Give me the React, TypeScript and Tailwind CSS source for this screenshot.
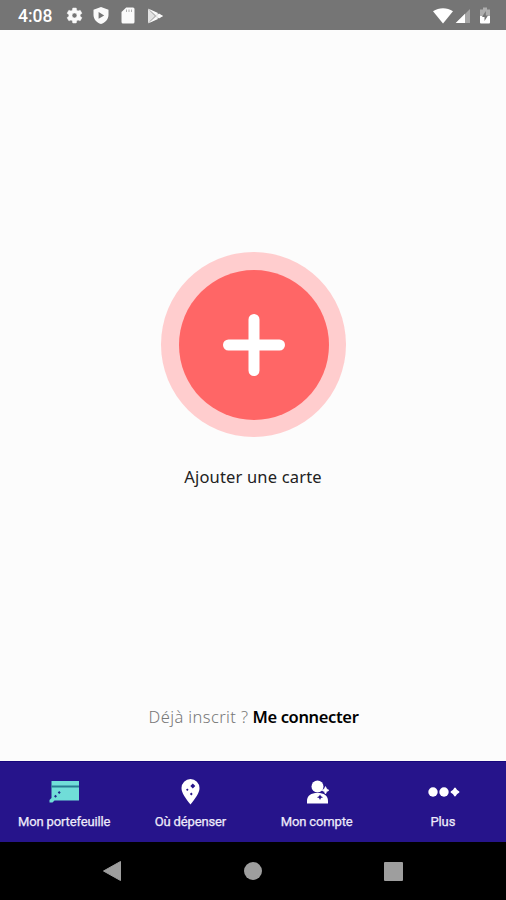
import type { ReactNode } from "react";

function StatusBar() {
  return (
    <header className="flex h-[30px] shrink-0 items-center bg-[#757575] pl-[18px] pr-[15px] pt-px text-white">
      <span className="w-[48px] whitespace-nowrap font-['Roboto',sans-serif] text-[17.5px] font-medium leading-[30px]">4:08</span>
      <svg className="h-[19px] w-[19px] -ml-[1.5px]" viewBox="0 0 24 24" fill="#fafafa" stroke="#fafafa" strokeWidth="0.5">
        <path d="M19.14 12.94a7.4 7.4 0 0 0 0-1.88l2.03-1.58a.5.5 0 0 0 .12-.61l-1.92-3.32a.5.5 0 0 0-.59-.22l-2.39.96a7 7 0 0 0-1.62-.94l-.36-2.54a.5.5 0 0 0-.48-.41h-3.84a.5.5 0 0 0-.47.41l-.36 2.54a7 7 0 0 0-1.62.94l-2.39-.96a.5.5 0 0 0-.59.22L2.74 8.87a.5.5 0 0 0 .12.61l2.03 1.58a7.4 7.4 0 0 0 0 1.88l-2.03 1.58a.5.5 0 0 0-.12.61l1.92 3.32c.12.22.37.29.59.22l2.39-.96c.5.38 1.03.7 1.62.94l.36 2.54c.05.24.24.41.48.41h3.84c.24 0 .44-.17.47-.41l.36-2.54a7 7 0 0 0 1.62-.94l2.39.96c.22.08.47 0 .59-.22l1.92-3.32a.5.5 0 0 0-.12-.61zM12 15.1a3.1 3.1 0 1 1 0-6.2 3.1 3.1 0 0 1 0 6.2z" />
      </svg>
      <svg className="ml-[9.5px] h-[17px] w-[16px]" viewBox="0 0 16 17" fill="#fafafa" fillRule="evenodd">
        <path d="M8 0 15.500 2.800V8C15.500 12.400 12 15.700 8 17 4 15.700.5 12.400.5 8V2.800ZM5.600 5V11.800L11.200 8.400Z" />
      </svg>
      <svg className="ml-[12px] h-[17px] w-[14px]" viewBox="0 0 14 17" fill="#fafafa">
        <path d="M5.200.5H12a1.500 1.500 0 0 1 1.500 1.500V15a1.500 1.500 0 0 1-1.500 1.500H2A1.500 1.500 0 0 1 .5 15V5Z" />
        <path d="M5.500 2.500V5M8 2.500V5M10.500 2.500V5" stroke="#b0b0b0" strokeWidth="1" />
      </svg>
      <svg className="ml-[12px] h-[16px] w-[17px]" viewBox="0 0 17 16">
        <path d="M1 1 16 8 1 15Z" fill="#e2e2e2" />
        <path d="M3 2.500 8.500 8 3 13.500" fill="none" stroke="#8f8f8f" strokeWidth="0.9" />
        <path d="M1 .5 11 5 9 7ZM1 15.500 11 11 9 9ZM12 5.500 16 8 12 10.500 10 8Z" fill="#fafafa" />
      </svg>
      <svg className="ml-auto h-[16px] w-[20px]" viewBox="0 0 20 16" fill="white">
        <path d="M0 3.300C6-.8 14-.8 20 3.300L10 15.500Z" />
      </svg>
      <svg className="ml-[2px] h-[16px] w-[16px]" viewBox="0 0 16 16">
        <path d="M15 1V15H1Z" fill="#a5a5a5" />
        <path d="M10 5.700V15H.7Z" fill="white" />
      </svg>
      <svg className="ml-[8px] h-[17px] w-[12px]" viewBox="0 0 12 17">
        <path d="M4 .5H8V2.500H11V9.500H1V2.500H4Z" fill="#adadad" />
        <path d="M1 9H11V15.500Q11 16.500 10 16.500H2Q1 16.500 1 15.500Z" fill="white" />
        <path d="M6.800 4 3 10H5.500V14L9 8.500H6.800Z" fill="#757575" />
      </svg>
    </header>
  );
}

function Tab({ label, children }: { label: string; children: ReactNode }) {
  return (
    <button className="flex flex-1 flex-col items-center">
      <svg className="mt-[14px] h-[32px] w-[40px]" viewBox="0 0 40 32" fill="white">{children}</svg>
      <span className="mt-[5px] whitespace-nowrap font-['Roboto',sans-serif] text-[13px] leading-[18px] tracking-[-0.14px] text-[#eeebfa] [-webkit-text-stroke:0.25px_#eeebfa]">{label}</span>
    </button>
  );
}

function TabBar() {
  return (
    <nav className="flex h-[81px] shrink-0 border-t border-[#17077c] bg-[#26148b] pl-px">
      <Tab label="Mon portefeuille">
        <path d="M7.500 5H35V24.500H10.500L8.500 26.500H5.500V24L7.500 22Z" fill="#70ddd8" />
        <path d="M7.500 9.500H35V11.500H7.500Z" fill="#287b92" />
        <path d="M11.500 18.700 13 20.200 11.500 21.700 10 20.200ZM15.200 15 16.700 16.500 15.200 18 13.700 16.500Z" fill="#22278a" />
      </Tab>
      <Tab label="Où dépenser">
        <path d="M20.500 3A9 9 0 0 1 29.500 12C29.500 17 25.500 22 20.500 28.500C15.500 22 11.500 17 11.500 12A9 9 0 0 1 20.500 3Z" />
        <path d="M22.800 7.500 25.300 10 22.800 12.500 20.300 10ZM17.300 12.500 18.600 13.800 17.300 15.100 16 13.800ZM21.300 16.600 22.700 18 21.300 19.400 19.900 18Z" fill="#26148b" />
      </Tab>
      <Tab label="Mon compte">
        <circle cx="20.500" cy="10.500" r="6" />
        <path d="M10 27.500V25C10 19.500 14 17 20.500 17S31 19.500 31 25V27.500Z" />
        <path d="M28.500 10.500 29.800 13 32 14.300 29.800 15.600 28.500 18 27.200 15.600 25 14.300 27.200 13Z" stroke="white" strokeWidth="0.6" />
        <path d="m23 18.500 1 1.800 2.100.9-2.100.9-1 1.900-1-1.900-2.100-.9 2.100-.9Z" fill="#26148b" />
      </Tab>
      <Tab label="Plus">
        <circle cx="10" cy="16" r="4.700" />
        <circle cx="21" cy="16" r="4.700" />
        <path d="m32 12.500 1.400 2.100L35.500 16l-2.100 1.400L32 19.500l-1.400-2.100L28.500 16l2.100-1.400Z" stroke="white" strokeWidth="1.8" strokeLinejoin="round" />
      </Tab>
    </nav>
  );
}

function SystemNav() {
  return (
    <footer className="flex h-[58px] shrink-0 items-center justify-between bg-black pl-[102px] pr-[103px]">
      <svg className="h-[22px] w-[20px]" viewBox="0 0 20 22"><path d="M1.500 11 18.500 1.500V20.500Z" fill="#9e9e9e" stroke="#9e9e9e" strokeLinejoin="round" /></svg>
      <span className="h-[18px] w-[18px] rounded-full bg-[#9e9e9e]" />
      <span className="h-[19px] w-[19px] rounded-[1px] bg-[#9e9e9e]" />
    </footer>
  );
}

export default function App() {
  return (
    <div className="flex h-[900px] w-[506px] flex-col overflow-hidden bg-[#fcfcfc]">
      <StatusBar />
      <main className="flex flex-1 flex-col items-center">
        <button aria-label="Ajouter" className="mt-[222px] ml-px flex h-[185px] w-[185px] shrink-0 items-center justify-center rounded-full bg-[#ffcdce]">
          <span className="flex h-[150px] w-[150px] items-center justify-center rounded-full bg-[#ff6666]">
            <svg className="h-[64px] w-[64px]" viewBox="0 0 64 64" stroke="white" strokeWidth="11" strokeLinecap="round">
              <path d="M32 6.500V57.500M6.500 32H57.500" />
            </svg>
          </span>
        </button>
        <p className="mt-[28px] whitespace-nowrap font-['Noto_Sans',sans-serif] text-[16.5px] leading-[24px] tracking-[0.17px] text-[#222]">Ajouter une carte</p>
        <p className="mt-auto mb-[32px] ml-px flex gap-[4px] whitespace-nowrap font-['Noto_Sans',sans-serif] text-[16.5px] leading-[24px]">
          <span className="font-light tracking-[0.4px] text-[#777]">Déjà inscrit ?</span>
          <span className="font-semibold tracking-[-0.35px] text-black">Me connecter</span>
        </p>
      </main>
      <TabBar />
      <SystemNav />
    </div>
  );
}
